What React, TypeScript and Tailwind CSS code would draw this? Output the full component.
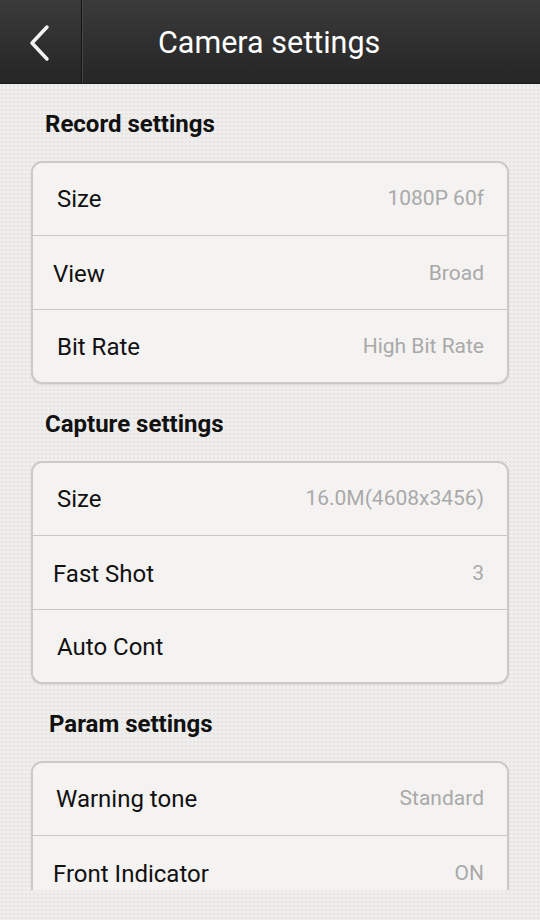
import { ReactNode } from 'react'

type Row = { label: string; value?: string; pad?: string }

const sections: { title: string; titlePad: string; rows: Row[] }[] = [
  {
    title: 'Record settings',
    titlePad: 'pl-[45px]',
    rows: [
      { label: 'Size', value: '1080P 60f', pad: 'pl-[24px]' },
      { label: 'View', value: 'Broad', pad: 'pl-[20px]' },
      { label: 'Bit Rate', value: 'High Bit Rate', pad: 'pl-[24px]' },
    ],
  },
  {
    title: 'Capture settings',
    titlePad: 'pl-[45px]',
    rows: [
      { label: 'Size', value: '16.0M(4608x3456)', pad: 'pl-[24px]' },
      { label: 'Fast Shot', value: '3', pad: 'pl-[20px]' },
      { label: 'Auto Cont', pad: 'pl-[24px]' },
    ],
  },
  {
    title: 'Param settings',
    titlePad: 'pl-[49px]',
    rows: [
      { label: 'Warning tone', value: 'Standard', pad: 'pl-[23px]' },
      { label: 'Front Indicator', value: 'ON', pad: 'pl-[20px]' },
    ],
  },
]

const rowHeights = ['h-[72px]', 'h-[74px] pt-[2px]', 'h-[73px] pt-[2px]']

const Card = ({ children }: { children: ReactNode }) => (
  <div className="mx-[31px] rounded-[11px] border-2 border-[#cbcac8] bg-[#f4f3f1] shadow-[0_1px_1px_rgba(0,0,0,0.08)]">
    {children}
  </div>
)

const App = () => {
  return (
    <div
      className="w-[540px] h-[920px] overflow-hidden bg-[#efeeec] bg-[radial-gradient(#e4e3e1_0.8px,transparent_0.8px)] bg-[length:4px_4px]"
      style={{ fontFamily: 'Roboto, "Noto Sans", sans-serif' }}
    >
      {/* top bar */}
      <div className="h-[84px] flex bg-gradient-to-b from-[#3b3b3b] to-[#252525] border-b border-[#1a1a1a]">
        <div className="w-[82px] flex items-center justify-center border-r border-[#151515]">
          <svg width="24" height="38" viewBox="0 0 24 38" className="mr-[2px] mt-[2px]">
            <path d="M19 3 L4 19 L19 35" fill="none" stroke="#f2f2f2" strokeWidth="3.5" strokeLinecap="round" strokeLinejoin="round" />
          </svg>
        </div>
        <div className="flex-1 flex items-center border-l border-[#464646] pl-[75px] pt-[2px]">
          <span className="text-[30.5px] text-white">Camera settings</span>
        </div>
      </div>

      {/* list */}
      <div className="h-[806px] overflow-hidden">
        {sections.map((s) => (
          <div key={s.title}>
            <div className={`h-[77px] flex items-center pt-[2px] ${s.titlePad}`}>
              <h2 className="text-[24px] font-bold text-[#111]">{s.title}</h2>
            </div>
            <Card>
              {s.rows.map((r, i) => (
                <div
                  key={r.label}
                  className={`flex items-center justify-between pr-[23px] ${r.pad} ${rowHeights[i]} ${
                    i > 0 ? 'border-t border-[#c9c8c6]' : ''
                  }`}
                >
                  <span className="text-[24px] text-[#111]">{r.label}</span>
                  {r.value && <span className="text-[21px] text-[#a9a9a9]">{r.value}</span>}
                </div>
              ))}
            </Card>
          </div>
        ))}
      </div>
    </div>
  )
}

export default App
